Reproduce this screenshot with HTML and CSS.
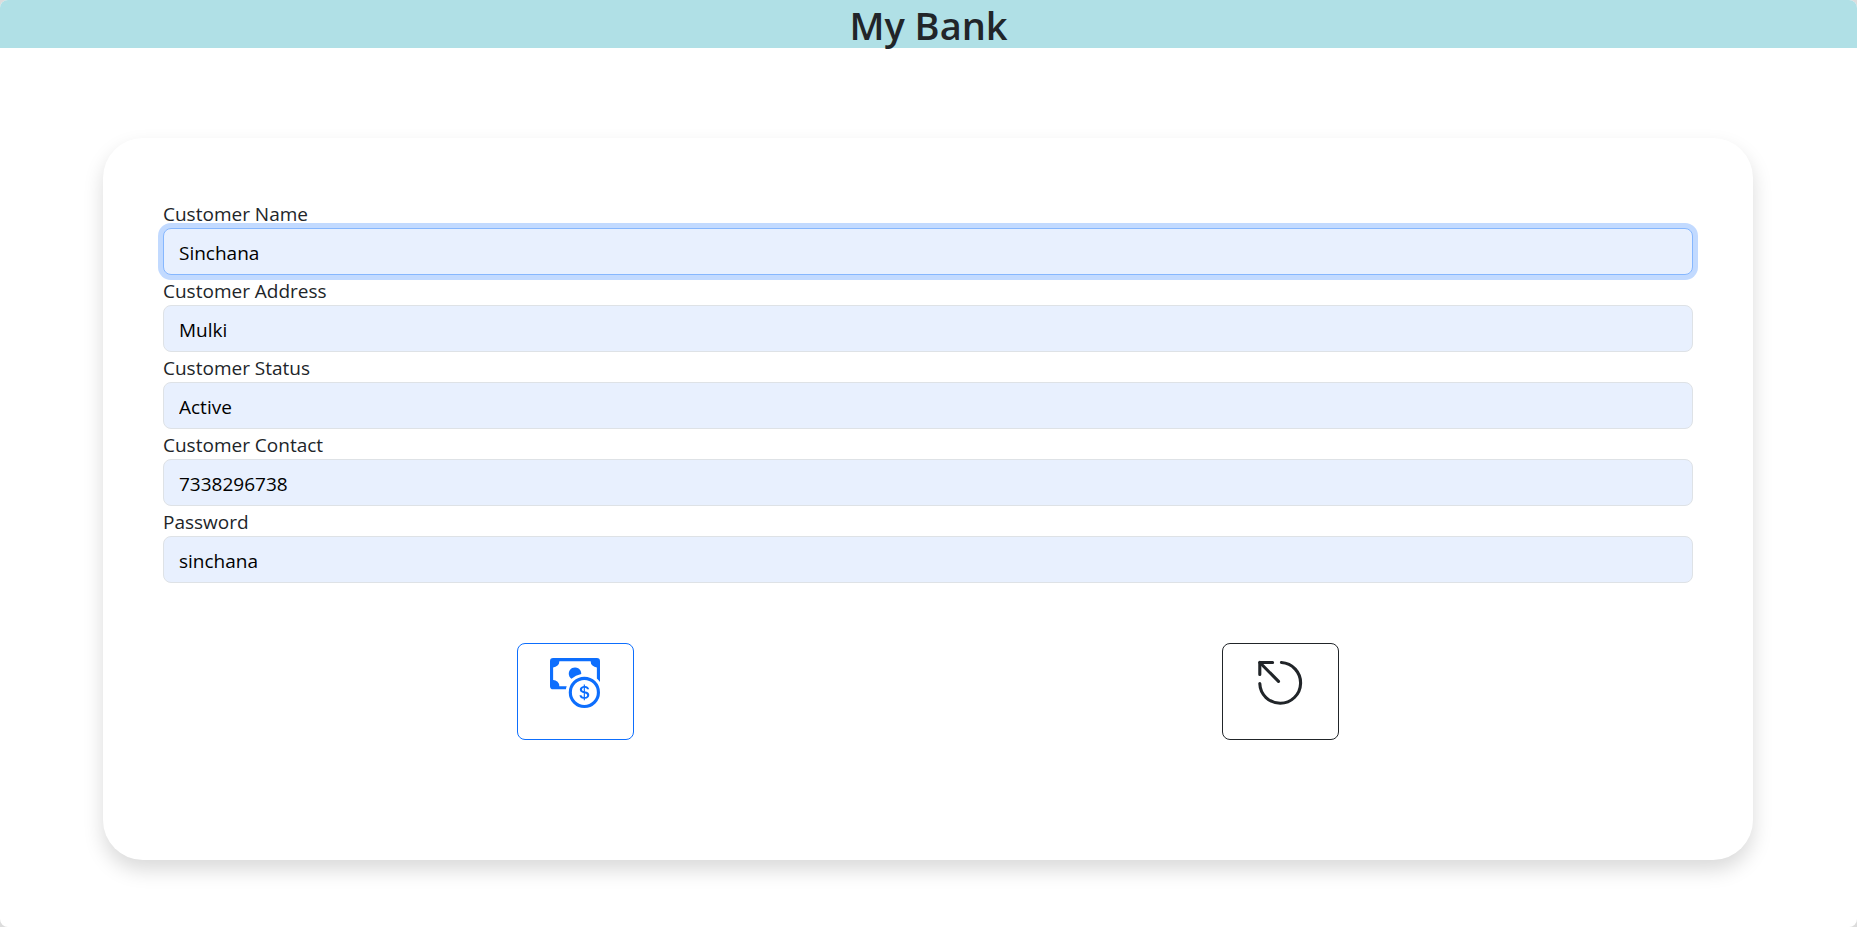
FILE: index.html
```html
<!DOCTYPE html>
<html lang="en">
<head>
<meta charset="utf-8">
<title>My Bank</title>
<link rel="stylesheet" href="styles.css">
</head>
<body>
<div class="page">
  <header class="banner"><h1 class="title">My Bank</h1></header>
  <main class="content">
    <form class="card">
      <label class="label" for="name">Customer Name</label>
      <input class="field field-active" id="name" type="text" value="Sinchana">
      <label class="label" for="address">Customer Address</label>
      <input class="field" id="address" type="text" value="Mulki">
      <label class="label" for="status">Customer Status</label>
      <input class="field" id="status" type="text" value="Active">
      <label class="label" for="contact">Customer Contact</label>
      <input class="field" id="contact" type="text" value="7338296738">
      <label class="label" for="password">Password</label>
      <input class="field" id="password" type="text" value="sinchana">
      <div class="actions">
        <button class="btn btn-primary" type="button" aria-label="Save">
          <svg class="icon" viewBox="0 0 16 16" fill="currentColor" aria-hidden="true">
            <path fill-rule="evenodd" d="M11 15a4 4 0 1 0 0-8 4 4 0 0 0 0 8m5-4a5 5 0 1 1-10 0 5 5 0 0 1 10 0"/>
            <path d="M9.438 11.944c.047.596.518 1.06 1.363 1.116v.44h.375v-.443c.875-.061 1.386-.529 1.386-1.207 0-.618-.39-.936-1.09-1.1l-.296-.07v-1.2c.376.043.614.248.671.532h.658c-.047-.575-.54-1.024-1.329-1.073V8.5h-.375v.45c-.747.073-1.255.522-1.255 1.158 0 .562.378.92 1.007 1.066l.248.061v1.272c-.384-.058-.639-.27-.696-.563h-.668zm1.36-1.354c-.369-.085-.569-.26-.569-.522 0-.294.216-.514.572-.578v1.1zm.432.746c.449.104.655.272.655.569 0 .339-.257.571-.709.614v-1.195z"/>
            <path d="M1 0a1 1 0 0 0-1 1v8a1 1 0 0 0 1 1h4.083q.088-.517.258-1H3a2 2 0 0 0-2-2V3a2 2 0 0 0 2-2h10a2 2 0 0 0 2 2v3.528c.38.34.717.728 1 1.154V1a1 1 0 0 0-1-1z"/>
            <path d="M9.998 5.083 10 5a2 2 0 1 0-3.132 1.65 6 6 0 0 1 3.13-1.567"/>
          </svg>
        </button>
        <button class="btn btn-dark" type="reset" aria-label="Reset">
          <svg class="icon" viewBox="0 0 50 50" fill="none" stroke="currentColor" stroke-width="3.1" stroke-linecap="round" stroke-linejoin="round" aria-hidden="true">
            <path d="M26.4 4.5A20.4 20.4 0 1 1 4.8 25.5"/>
            <path d="M4.8 16.5V4.5H17.6"/>
            <path d="M4.8 4.5 23.5 23.4"/>
          </svg>
        </button>
      </div>
    </form>
  </main>
</div>
</body>
</html>
```
FILE: styles.css
```css
* { box-sizing: border-box; }

html { background: #dcdcdc; }

body {
  margin: 0;
  font-family: "Segoe UI", "Open Sans", "Noto Sans", sans-serif;
  font-size: 19px;
  line-height: 28px;
  color: #212529;
}

.page {
  min-height: 100vh;
  background: #fff;
  border-radius: 8px;
}

.banner {
  padding-top: 2px;
  background: #b0e0e6;
  border-radius: 8px 8px 0 0;
  text-align: center;
}

.title {
  margin: 0;
  font-size: 38px;
  font-weight: 600;
  line-height: 46px;
}

.content { padding: 90px 104px 60px 103px; }

.card {
  display: flex;
  flex-direction: column;
  padding: 60px;
  background: #fff;
  border-radius: 40px;
  box-shadow: 0 10px 20px rgba(0, 0, 0, 0.15);
}

.label { padding-top: 2px; }

.field {
  width: 100%;
  height: 47px;
  padding: 9px 15px 7px;
  font: inherit;
  color: #000;
  background: #e8f0fe;
  border: 1px solid #dee2e6;
  border-radius: 8px;
}

.field-active,
.field:focus {
  border-color: #86b7fe;
  outline: none;
  box-shadow: 0 0 0 5px #c2daff;
}

.actions {
  display: flex;
  justify-content: space-around;
  padding: 60px;
}

.btn {
  display: flex;
  justify-content: flex-start;
  align-items: flex-start;
  width: 117px;
  height: 97px;
  padding: 14px 32px;
  background: transparent;
  border: 1px solid currentColor;
  border-radius: 8px;
}

.btn-primary { color: #0d6efd; }
.btn-dark { color: #212529; }

.icon {
  flex: none;
  width: 50px;
  height: 50px;
}
```
